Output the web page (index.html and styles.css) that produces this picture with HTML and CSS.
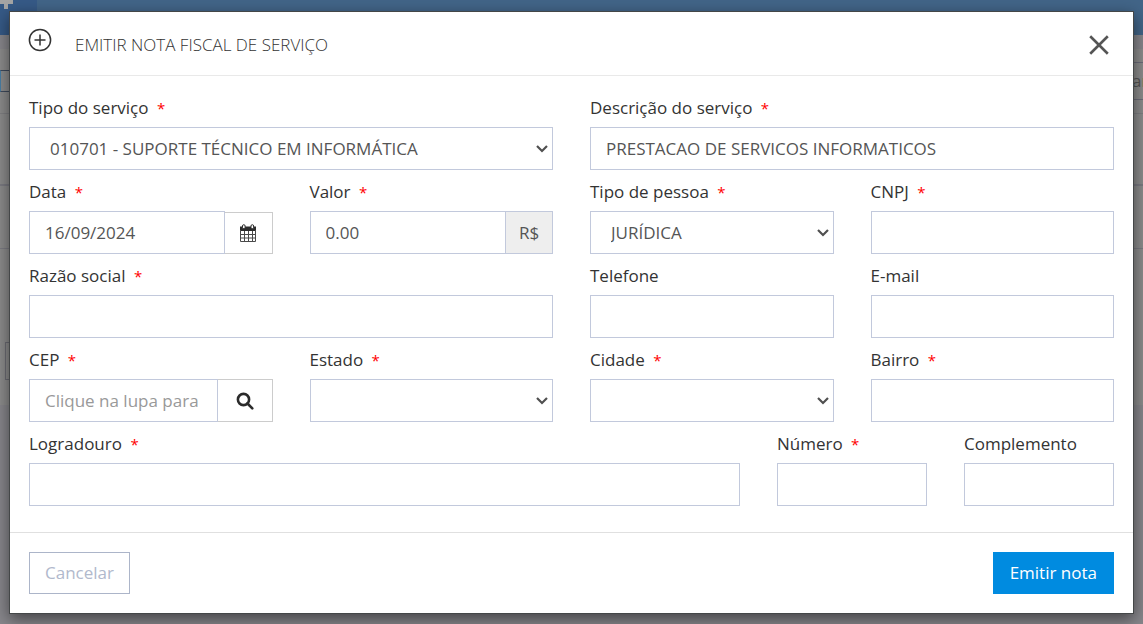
FILE: index.html
```html
<!DOCTYPE html>
<html lang="pt-BR">
<head>
<meta charset="utf-8">
<title>Emitir nota fiscal de serviço</title>
<link rel="stylesheet" href="styles.css">
</head>
<body>
<div class="page" aria-hidden="true">
  <div class="page-top"><div class="page-brand"><span class="brand-mark"></span></div></div>
  <div class="page-sub"></div>
  <div class="page-panel">
    <div class="panel-bar"><span class="panel-check"></span><span class="panel-end">a<b>r</b></span></div>
    <div class="panel-row first"></div>
    <div class="panel-row second"></div>
    <div class="panel-row tall"></div>
    <div class="panel-foot"><span class="panel-button"></span></div>
  </div>
</div>
<div class="overlay">
  <form class="modal" role="dialog" aria-labelledby="title">
    <header class="modal-header">
      <svg class="plus" viewBox="0 0 24 24" aria-hidden="true"><circle cx="12" cy="12" r="10.6"/><path d="M12 6.500v11M6.500 12h11"/></svg>
      <h1 class="modal-title" id="title">EMITIR NOTA FISCAL DE SERVIÇO</h1>
      <button class="close" type="button" aria-label="Fechar"><svg viewBox="0 0 20 20"><path d="M2 2l16 16M18 2L2 18"/></svg></button>
    </header>
    <div class="modal-body">
      <div class="field span-6">
        <label for="tipo">Tipo do serviço <span class="req">*</span></label>
        <div class="select-wrap"><select class="control" id="tipo"><option>010701 - SUPORTE TÉCNICO EM INFORMÁTICA</option></select><svg class="chevron" viewBox="0 0 12 8"><path d="M1 1l5 5 5-5"/></svg></div>
      </div>
      <div class="field span-6">
        <label for="descricao">Descrição do serviço <span class="req">*</span></label>
        <input class="control" id="descricao" value="PRESTACAO DE SERVICOS INFORMATICOS">
      </div>
      <div class="field span-3">
        <label for="data">Data <span class="req">*</span></label>
        <div class="group"><input class="control" id="data" value="16/09/2024"><button class="addon date" type="button" aria-label="Abrir calendário"><svg class="calendar" viewBox="0 0 18 18"><path class="solid" d="M1 2.500h16v4.500H1z"/><path class="grid" d="M1.500 6v11.500h15V6M1.500 10.500h15M1.500 14h15M5.500 7v10.500M9.500 7v10.500M13.500 7v10.500"/><rect class="ring" x="3.500" y=".7" width="2.600" height="4" rx="1.300"/><rect class="ring" x="12" y=".7" width="2.600" height="4" rx="1.300"/></svg></button></div>
      </div>
      <div class="field span-3">
        <label for="valor">Valor <span class="req">*</span></label>
        <div class="group"><input class="control" id="valor" value="0.00"><span class="addon currency">R$</span></div>
      </div>
      <div class="field span-3">
        <label for="pessoa">Tipo de pessoa <span class="req">*</span></label>
        <div class="select-wrap"><select class="control" id="pessoa"><option>JURÍDICA</option></select><svg class="chevron" viewBox="0 0 12 8"><path d="M1 1l5 5 5-5"/></svg></div>
      </div>
      <div class="field span-3">
        <label for="cnpj">CNPJ <span class="req">*</span></label>
        <input class="control" id="cnpj">
      </div>
      <div class="field span-6">
        <label for="razao">Razão social <span class="req">*</span></label>
        <input class="control" id="razao">
      </div>
      <div class="field span-3">
        <label for="telefone">Telefone</label>
        <input class="control" id="telefone" type="tel">
      </div>
      <div class="field span-3">
        <label for="email">E-mail</label>
        <input class="control" id="email" type="email">
      </div>
      <div class="field span-3">
        <label for="cep">CEP <span class="req">*</span></label>
        <div class="group"><input class="control" id="cep" placeholder="Clique na lupa para buscar"><button class="addon search" type="button" aria-label="Buscar CEP"><svg class="lens" viewBox="0 0 18 18"><circle cx="7.500" cy="7.500" r="5.600"/><path d="M11.500 11.500l4.800 4.800"/></svg></button></div>
      </div>
      <div class="field span-3">
        <label for="estado">Estado <span class="req">*</span></label>
        <div class="select-wrap"><select class="control" id="estado"><option></option></select><svg class="chevron" viewBox="0 0 12 8"><path d="M1 1l5 5 5-5"/></svg></div>
      </div>
      <div class="field span-3">
        <label for="cidade">Cidade <span class="req">*</span></label>
        <div class="select-wrap"><select class="control" id="cidade"><option></option></select><svg class="chevron" viewBox="0 0 12 8"><path d="M1 1l5 5 5-5"/></svg></div>
      </div>
      <div class="field span-3">
        <label for="bairro">Bairro <span class="req">*</span></label>
        <input class="control" id="bairro">
      </div>
      <div class="field span-8">
        <label for="logradouro">Logradouro <span class="req">*</span></label>
        <input class="control" id="logradouro">
      </div>
      <div class="field span-2">
        <label for="numero">Número <span class="req">*</span></label>
        <input class="control" id="numero">
      </div>
      <div class="field span-2">
        <label for="complemento">Complemento</label>
        <input class="control" id="complemento">
      </div>
    </div>
    <footer class="modal-footer">
      <button class="btn cancel" type="button">Cancelar</button>
      <button class="btn submit" type="submit">Emitir nota</button>
    </footer>
  </form>
</div>
</body>
</html>
```
FILE: styles.css
```css
* { box-sizing: border-box; }
body {
  margin: 0;
  overflow: hidden;
  background: #87868b;
  color: #333;
  font: 17px/24px "Open Sans", sans-serif;
}
button, input, select { font: inherit; border-radius: 0; margin: 0; }

.page { min-height: 100vh; }
.page-top { height: 35px; background: #426588; }
.page-brand { width: 37px; height: 35px; background: #365a87; }
.brand-mark { display: block; width: 13px; height: 9px; background: linear-gradient(#a5a5a5, #a5a5a5) 0 0 / 13px 4px no-repeat, linear-gradient(#a5a5a5, #a5a5a5) 4px 0 / 4px 9px no-repeat; }
.page-sub { height: 14px; background: #87868b; }
.page-panel { background: #8c8c8c; }
.panel-bar { display: flex; justify-content: space-between; align-items: center; height: 65px; border-bottom: 1px solid #7f7f82; }
.panel-check { width: 24px; height: 22px; border: 1px solid #3f4a5c; border-left-color: #4a7fa5; }
.panel-end { width: 12px; height: 38px; border: 1px solid #6c6c7a; border-width: 1px 0; padding-left: 1px; line-height: 36px; color: #555; font-size: 17px; }
.panel-end b { color: #a0683a; font-weight: 400; }
.panel-row { border-bottom: 1px solid #7b7b82; }
.panel-row.first { height: 72px; border-bottom-width: 2px; }
.panel-row.second { height: 63px; }
.panel-row.tall { height: 93px; border-bottom: 0; }
.panel-foot { height: 63px; padding-left: 5px; }
.panel-button { display: block; width: 60px; height: 38px; border: 1px solid #6c6c74; }

.overlay { position: absolute; top: 0; left: 0; right: 0; padding: 11px 9px; }
.modal { background: #fff; border: 1px solid #444748; box-shadow: 0 5px 15px rgba(0, 0, 0, .5); }
.modal-header { display: flex; align-items: center; height: 64px; padding: 0 23px 0 18px; border-bottom: 1px solid #e9e9e9; }
.plus { width: 24px; height: 24px; margin-bottom: 8px; fill: none; stroke: #333; stroke-width: 1.5; }
.modal-title { flex: 1; margin: 2px 0 0 23px; color: #333; font-size: 17px; font-weight: 300; line-height: 24px; }
.close { display: flex; margin-top: 3px; padding: 0; border: 0; background: none; }
.close svg { width: 22px; height: 22px; fill: none; stroke: #555; stroke-width: 2.4; }

.modal-body { display: grid; grid-template-columns: repeat(12, minmax(0, 1fr)); gap: 10px 37px; padding: 20px 19px 26px; }
.span-2 { grid-column: span 2; }
.span-3 { grid-column: span 3; }
.span-6 { grid-column: span 6; }
.span-8 { grid-column: span 8; }
.field { display: flex; flex-direction: column; gap: 7px; }
.field label { height: 24px; }
.req { margin-left: 4px; color: #f00; font-size: 15px; }
.control { display: block; width: 100%; min-width: 0; height: 43px; padding: 0 15px; border: 1px solid #c2c9dc; background: #fff; color: #555; outline: 0; }
.control::placeholder { color: #999; opacity: 1; }
.select-wrap { display: grid; align-items: center; }
.select-wrap > * { grid-area: 1 / 1; }
select.control { appearance: none; padding: 0 30px 0 20px; }
.chevron { justify-self: end; width: 12px; height: 8px; margin-right: 5px; fill: none; stroke: #505050; stroke-width: 2.2; pointer-events: none; }
.group { display: flex; }
.group .control { flex: 1; }
.addon { display: flex; flex: none; align-items: center; justify-content: center; padding: 0; border: 1px solid #ccc; border-left: 0; background: #fff; color: #555; }
.addon.date { width: 48px; margin-top: 1px; }
.addon.currency { width: 47px; background: #eee; border-color: #c2c9dc; }
.addon.search { width: 55px; }
.calendar { width: 18px; height: 18px; }
.calendar .solid { fill: #2b2b2b; }
.calendar .grid { fill: none; stroke: #4a4a4a; }
.calendar .ring { fill: #fff; stroke: #2b2b2b; }
.lens { width: 18px; height: 18px; fill: none; stroke: #2b2b2b; stroke-width: 2.6; stroke-linecap: round; }

.modal-footer { display: flex; justify-content: space-between; padding: 19px 19px 19px; border-top: 1px solid #e0e0e0; }
.btn { height: 42px; padding: 0 16px; border: 1px solid; }
.cancel { padding: 0 15px; background: #fff; border-color: #acb5c9; color: #b1b9cc; }
.submit { background: #008be0; border-color: #008be0; color: #fff; }
```
